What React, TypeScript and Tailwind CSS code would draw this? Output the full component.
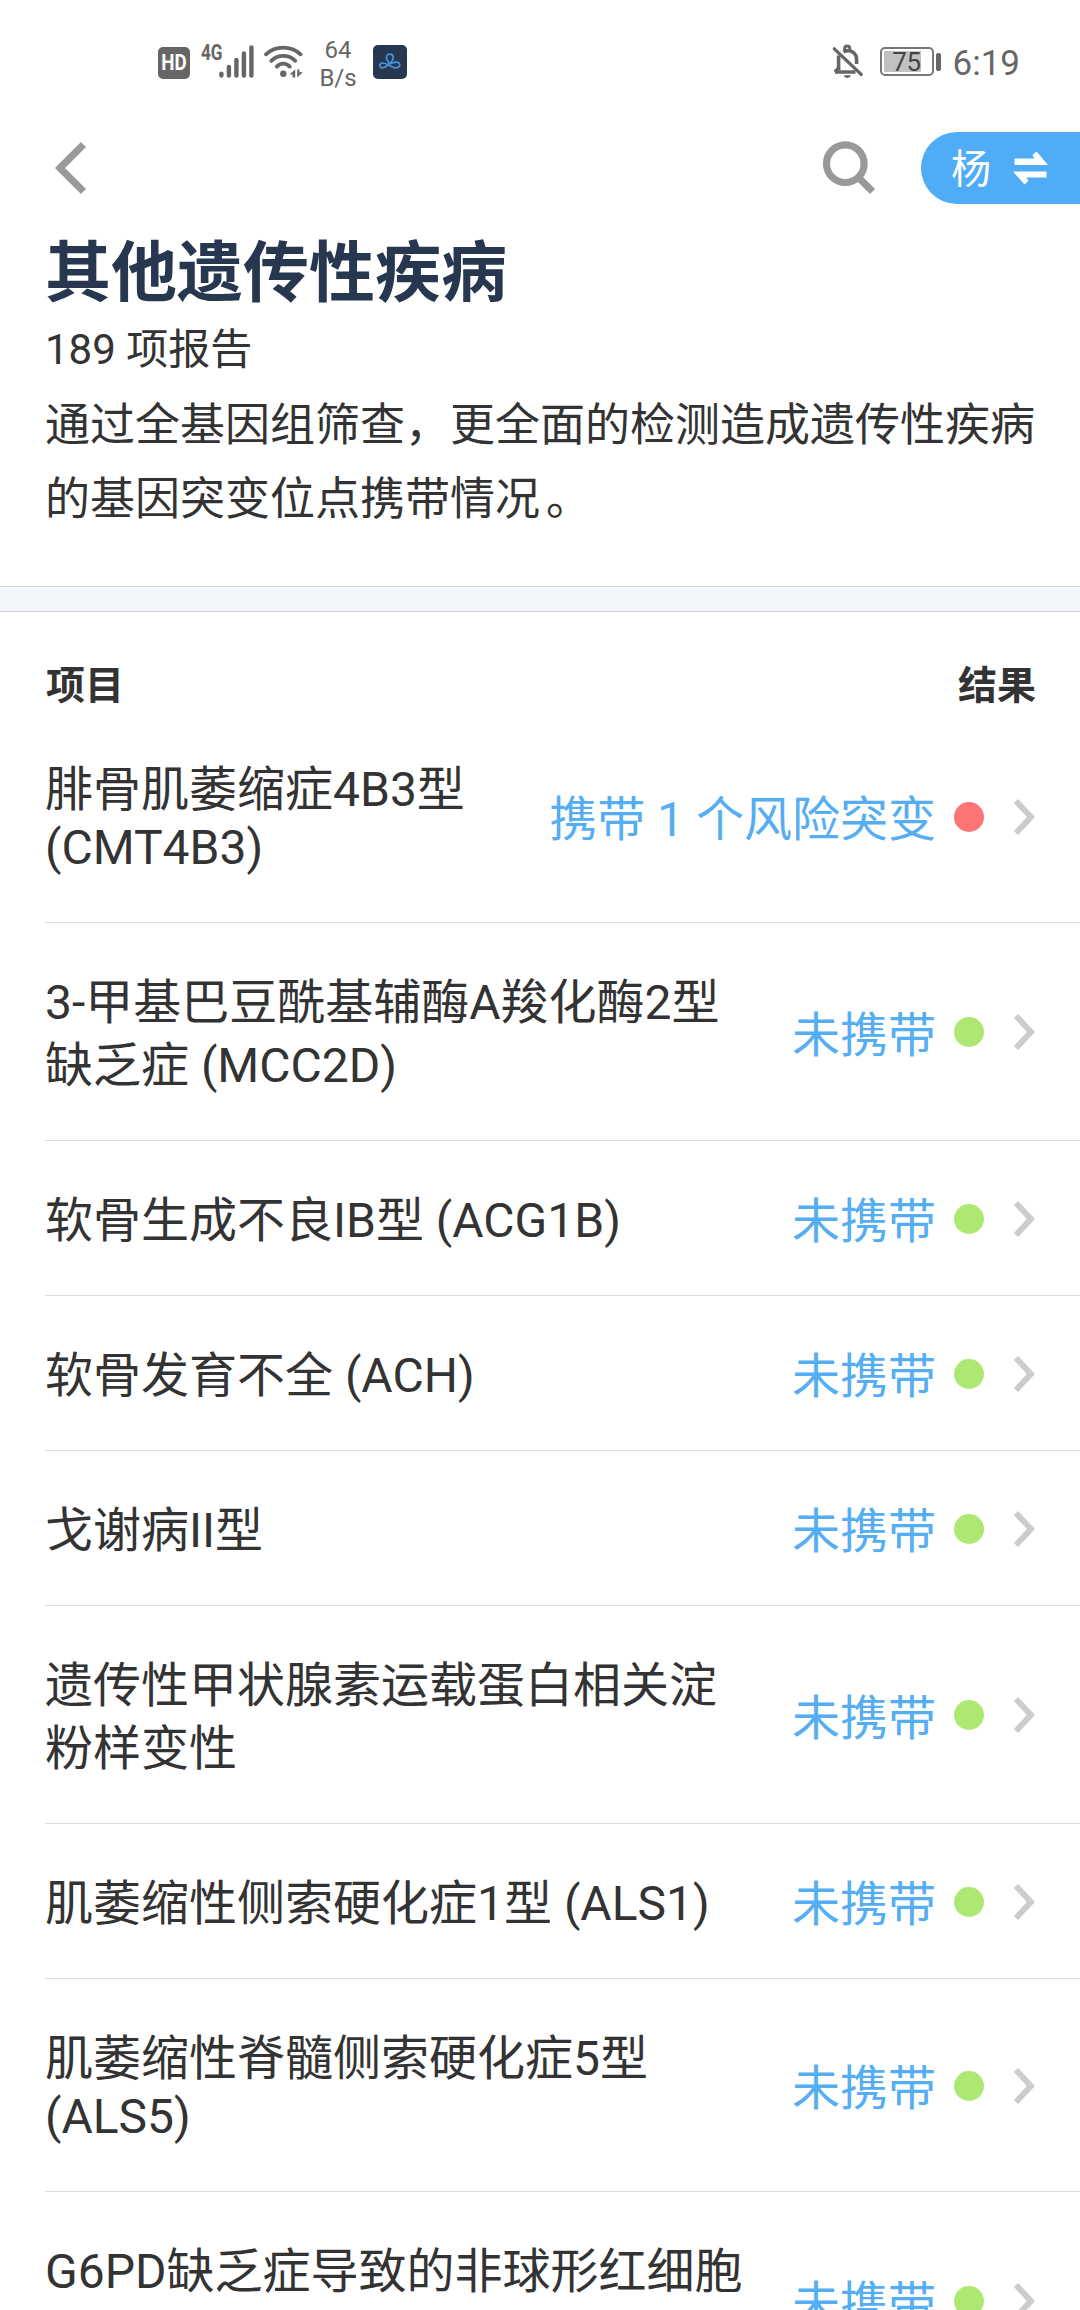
type Item = {
  name: string[];
  result: string;
  risk?: boolean;
  // the second line has no CJK glyphs and sits a bit tighter
  tight?: boolean;
};

const items: Item[] = [
  { name: ["腓骨肌萎缩症4B3型", "(CMT4B3)"], result: "携带 1 个风险突变", risk: true, tight: true },
  { name: ["3-甲基巴豆酰基辅酶A羧化酶2型", "缺乏症 (MCC2D)"], result: "未携带" },
  { name: ["软骨生成不良IB型 (ACG1B)"], result: "未携带" },
  { name: ["软骨发育不全 (ACH)"], result: "未携带" },
  { name: ["戈谢病II型"], result: "未携带" },
  { name: ["遗传性甲状腺素运载蛋白相关淀", "粉样变性"], result: "未携带" },
  { name: ["肌萎缩性侧索硬化症1型 (ALS1)"], result: "未携带" },
  { name: ["肌萎缩性脊髓侧索硬化症5型", "(ALS5)"], result: "未携带", tight: true },
  { name: ["G6PD缺乏症导致的非球形红细胞", "\u00a0"], result: "未携带" },
];

function SignalIcon() {
  return (
    <svg className="ml-px mt-[45px]" width="35" height="33" viewBox="0 0 35 33" stroke="#666" strokeWidth="4.4" strokeLinecap="round">
      <path d="M2.4 28.6v2M9.9 22v8.6M17.4 15v15.6M24.9 8.5v22.1M32.4 2.4v28.2" />
    </svg>
  );
}

function WifiIcon() {
  return (
    <svg className="ml-[10px] mt-[44px]" width="40" height="35" viewBox="0 0 40 35" fill="none" stroke="#666" strokeWidth="3.8" strokeLinecap="round">
      <path d="M2 10.3C11.5 1.3 27 1.3 36.6 10.3" />
      <path d="M7.3 16.8C14 10.2 24.5 10.2 31.3 16.8" />
      <path d="M12.8 22.6C16.6 18.6 22 18.6 25.8 22.6" />
      <circle cx="19.3" cy="29.8" r="3.2" fill="#666" stroke="none" />
      <path d="M25.500 30.600 31.200 25.600v8h-2.600v-3zM33.200 33.600v-8h2.200v2.600h3.600z" fill="#666" stroke="none" />
    </svg>
  );
}

function AppBadge() {
  return (
    <svg className="ml-[16px] mt-[45px]" width="34" height="34" viewBox="0 0 34 34" fill="none">
      <rect width="34" height="34" rx="5" fill="#27374f" />
      <path
        d="M14.500 15.500C12 12 14 9 17.200 9.200c4 .3 3.800 5.200.6 8.200-3 3-6.200 5.600-8.800 5.400-3.400-.2-3-4.600.6-4.800 4.800-.2 8.400 4.800 13 4.800 5.200 0 5.600-5.400 1-5.600-3.600-.2-5.400 2.400-7.600 1z"
        stroke="#4796d8"
        strokeWidth="1.700"
      />
    </svg>
  );
}

function BellOffIcon() {
  return (
    <svg className="mt-[44px]" width="32" height="35" viewBox="0 0 32 35" fill="none" stroke="#666" strokeWidth="3.600">
      <path d="M6.600 11.500V26M3 28h20.500" />
      <path d="M2.800 28l4.500-4.500" />
      <path d="M11.500 7.800C18 4.500 25 9 24.600 16.500V20" />
      <path d="M12.600 6.500V4.600a2.600 2.600 0 015.200 0v2" strokeWidth="2.800" />
      <path d="M2.300 4.800l27 25.700" strokeWidth="3.200" strokeLinecap="round" />
      <path d="M11.800 31.200h7.200c-1.200 3.600-6 3.600-7.200 0z" fill="#666" stroke="none" />
    </svg>
  );
}

function StatusBar() {
  return (
    <div className="flex h-[120px] items-start justify-between pl-[158px] pr-[60px] text-[#666]">
      <div className="flex items-start">
        <div className="mt-[47px] flex h-8 w-8 items-center justify-center rounded-[5px] bg-[#666] text-white">
          <span className="scale-x-[0.85] text-[22px] font-bold leading-none">HD</span>
        </div>
        <div className="ml-[11px] mt-[41px] w-[17px] origin-left scale-x-[0.78] text-[22px] font-bold leading-[24px]">4G</div>
        <SignalIcon />
        <WifiIcon />
        <div className="ml-[15px] mt-[36px] w-[38px] text-center text-[24px] leading-[28px]">
          <div>64</div>
          <div>B/s</div>
        </div>
        <AppBadge />
      </div>
      <div className="flex items-start">
        <BellOffIcon />
        <div className="ml-[16px] mt-[47px] flex h-[29px] w-[54px] rounded-[5px] border-2 border-[#777] p-[2px]">
          <div className="flex h-[21px] w-[37px] items-center justify-end bg-[#c1c1c1]">
            <span className="text-[26px] leading-none tracking-[-0.5px] text-[#444]">75</span>
          </div>
        </div>
        <div className="ml-[2px] mt-[53px] h-[18px] w-[5px] rounded-[2px] bg-[#666]" />
        <div className="ml-[12px] mt-[43px] text-[35px] leading-[41px]">6:19</div>
      </div>
    </div>
  );
}

function NavBar() {
  return (
    <div className="flex h-[96px] items-center pl-[54px]">
      <svg width="34" height="54" viewBox="0 0 34 54" fill="none" stroke="#999" strokeWidth="7.200">
        <path d="M29.500 3.500L6 27l23.500 23.500" />
      </svg>
      <svg className="ml-auto" width="54" height="54" viewBox="0 0 54 54" fill="none" stroke="#999" strokeWidth="7.200">
        <circle cx="23.300" cy="22.700" r="18.800" />
        <path d="M36.500 36.500L50.500 50.500" />
      </svg>
      <div className="ml-[45px] flex h-[72px] w-[159px] items-center rounded-l-full bg-[#4fadf8] pl-[30px] text-white">
        <span className="pt-[3px] text-[40px] leading-[50px]">杨</span>
        <svg className="ml-[21px]" width="37" height="35" viewBox="0 0 37 35" fill="#fff">
          <path d="M2.500 7.500h20L20.500 4 24.500.5 36 14H2.500zM34.500 20.500v6H14.500l2 3.500-4 3.500L1 20.500z" />
        </svg>
      </div>
    </div>
  );
}

function Row({ item, last }: { item: Item; last: boolean }) {
  return (
    <div className={`ml-[45px] flex items-center justify-between pr-[45px] ${last ? "" : "border-b border-[#dcdcdc]"}`}>
      <div className="whitespace-nowrap pb-[43px] pt-[48px] text-[48px] leading-[63px] text-[#333]">
        {item.name.map((line, i) => (
          <div key={i} className={i === 1 && item.tight ? "-mt-[5px]" : ""}>
            {line}
          </div>
        ))}
      </div>
      <div className="flex items-center pt-px">
        <span className="whitespace-nowrap pt-[7px] text-[48px] leading-[56px] text-[#55adf3]">{item.result}</span>
        <span className={`ml-[18px] h-[30px] w-[30px] rounded-full ${item.risk ? "bg-[#ff7575]" : "bg-[#ade873]"}`} />
        <svg className="ml-[29px]" width="22" height="38" viewBox="0 0 22 38" fill="none" stroke="#ccc" strokeWidth="6">
          <path d="M3 3l15 16L3 35" />
        </svg>
      </div>
    </div>
  );
}

export default function App() {
  return (
    <div className="h-[2310px] w-[1080px] overflow-hidden bg-white font-[Roboto,'Noto_Sans_CJK_SC',sans-serif]">
      <StatusBar />
      <NavBar />

      <div className="h-[370px] px-[45px] pt-[16px] text-[#333]">
        <h1 className="text-[66px] font-bold leading-[84px] text-[#27374f]">其他遗传性疾病</h1>
        <div className="pt-[6px] text-[42px] leading-[56px]">189 项报告</div>
        <p className="whitespace-nowrap pt-[11px] text-[45px] leading-[74px]">
          通过全基因组筛查，更全面的检测造成遗传性疾病
          <br />
          的基因突变位点携带情况<span className="pl-1.5">。</span>
        </p>
      </div>

      <div className="h-[26px] border-y border-[#d6d8da] bg-[#f2f6fa]" />

      <div className="flex h-[98px] items-start justify-between pl-[46px] pr-[44px] pt-[51px] text-[39px] font-bold leading-[46px] text-[#333]">
        <span>项目</span>
        <span>结果</span>
      </div>

      {items.map((item, i) => (
        <Row key={i} item={item} last={i === items.length - 1} />
      ))}
    </div>
  );
}
